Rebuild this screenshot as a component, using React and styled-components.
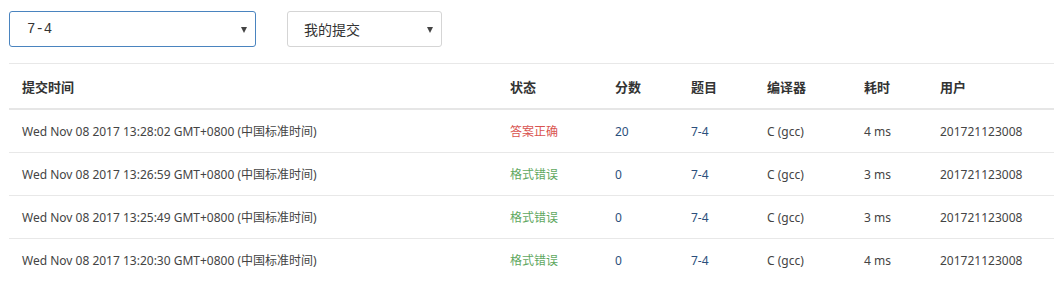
import React from 'react'
import styled, { createGlobalStyle } from 'styled-components'

const GlobalStyle = createGlobalStyle`
  html, body {
    margin: 0;
    background: #fff;
  }
`

const Page = styled.div`
  padding: 11px 0 0 9px;
  font-family: "Noto Sans", "Noto Sans CJK SC", sans-serif;
  color: #333;
  overflow: hidden;
`

const Filters = styled.div`
  display: flex;
  gap: 31px;
  margin-bottom: 16px;
`

const SelectBox = styled.div`
  position: relative;
  box-sizing: border-box;
  width: ${props => props.width}px;
  height: 36px;
  border: 1px solid ${props => (props.focused ? '#4a84bf' : '#d5d5d5')};
  border-radius: 3px;
  display: flex;
  align-items: center;
  padding-left: ${props => props.pad}px;
  font-family: "Liberation Mono", "Noto Sans CJK SC", monospace;
  font-size: 14px;
  color: #333;
`

const Caret = styled.span`
  position: absolute;
  right: 8px;
  top: 15px;
  width: 0;
  height: 0;
  border-left: 3.5px solid transparent;
  border-right: 3.5px solid transparent;
  border-top: 6px solid #444;
`

const Table = styled.table`
  width: 1060px;
  border-collapse: collapse;
  table-layout: fixed;
  border-top: 1px solid #e8e8e8;
  font-size: 12px;
`

const HeadCell = styled.th`
  text-align: left;
  font-weight: bold;
  font-size: 13px;
  color: #333;
  height: 44px;
  padding: 0 13px;
  border-bottom: 2px solid #e6e6e6;
`

const Row = styled.tr`
  & + & td {
    border-top: 1px solid #e8e8e8;
  }
`

const Cell = styled.td`
  height: 42px;
  padding: 0 13px;
  color: ${props => props.color || '#444'};
  white-space: nowrap;
`

const columns = [
  { title: '提交时间', width: 488 },
  { title: '状态', width: 105 },
  { title: '分数', width: 76 },
  { title: '题目', width: 76 },
  { title: '编译器', width: 97 },
  { title: '耗时', width: 76 },
  { title: '用户', width: 142 }
]

const statusColors = {
  '答案正确': '#d9534f',
  '格式错误': '#5fa85f'
}

const rows = [
  { time: 'Wed Nov 08 2017 13:28:02 GMT+0800 (中国标准时间)', status: '答案正确', score: 20, problem: '7-4', compiler: 'C (gcc)', cost: '4 ms', user: '201721123008' },
  { time: 'Wed Nov 08 2017 13:26:59 GMT+0800 (中国标准时间)', status: '格式错误', score: 0, problem: '7-4', compiler: 'C (gcc)', cost: '3 ms', user: '201721123008' },
  { time: 'Wed Nov 08 2017 13:25:49 GMT+0800 (中国标准时间)', status: '格式错误', score: 0, problem: '7-4', compiler: 'C (gcc)', cost: '3 ms', user: '201721123008' },
  { time: 'Wed Nov 08 2017 13:20:30 GMT+0800 (中国标准时间)', status: '格式错误', score: 0, problem: '7-4', compiler: 'C (gcc)', cost: '4 ms', user: '201721123008' }
]

export default function App () {
  return (
    <Page>
      <GlobalStyle />
      <Filters>
        <SelectBox width={247} pad={17} focused>
          7-4
          <Caret />
        </SelectBox>
        <SelectBox width={155} pad={16}>
          我的提交
          <Caret />
        </SelectBox>
      </Filters>
      <Table>
        <colgroup>
          {columns.map(c => <col key={c.title} style={{ width: c.width }} />)}
        </colgroup>
        <thead>
          <tr>
            {columns.map(c => <HeadCell key={c.title}>{c.title}</HeadCell>)}
          </tr>
        </thead>
        <tbody>
          {rows.map(r => (
            <Row key={r.time}>
              <Cell>{r.time}</Cell>
              <Cell color={statusColors[r.status]}>{r.status}</Cell>
              <Cell color='#2c4f7c'>{r.score}</Cell>
              <Cell color='#2c4f7c'>{r.problem}</Cell>
              <Cell>{r.compiler}</Cell>
              <Cell>{r.cost}</Cell>
              <Cell>{r.user}</Cell>
            </Row>
          ))}
        </tbody>
      </Table>
    </Page>
  )
}
